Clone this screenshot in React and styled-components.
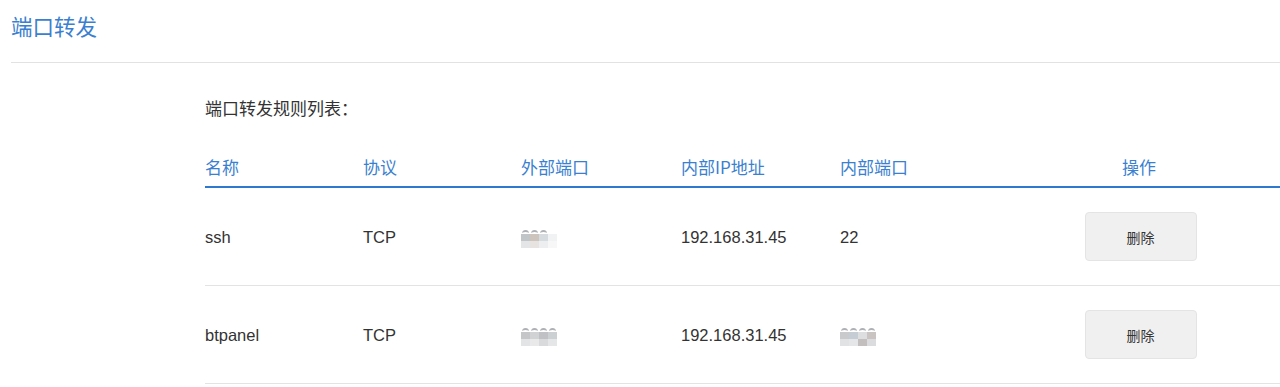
import React from "react";
import styled, { createGlobalStyle } from "styled-components";

const Global = createGlobalStyle`
  html, body { margin: 0; padding: 0; background: #fff; }
  body { font-family: "Liberation Sans", "Noto Sans CJK SC", sans-serif; color: #333; }
`;

const Page = styled.div`
  padding-left: 11px;
  width: 1269px;
`;

const TitleBar = styled.div`
  height: 63px;
  box-sizing: border-box;
  padding-top: 14px;
  border-bottom: 1px solid #e2e2e2;
`;

const Title = styled.h1`
  margin: 0;
  font-family: "Noto Sans CJK SC", sans-serif;
  font-weight: 400;
  font-size: 21.5px;
  line-height: 24px;
  color: #3b7fd0;
`;

const Content = styled.div`
  margin-left: 194px;
`;

const SubTitle = styled.div`
  margin-top: 33px;
  font-family: "Noto Sans CJK SC", sans-serif;
  font-size: 17px;
  line-height: 24px;
  color: #333;
`;

const Table = styled.div`
  margin-top: 26px;
`;

const Row = styled.div`
  display: grid;
  grid-template-columns: 158px 158px 160px 159px 158px 1fr;
  align-items: center;
  height: ${(p) => (p.$head ? "40px" : "97px")};
  border-bottom: ${(p) => (p.$head ? "2px solid #2f78cf" : "1px solid #e3e3e3")};
`;

const HeadCell = styled.div`
  font-family: "Noto Sans CJK SC", sans-serif;
  font-size: 17px;
  line-height: 24px;
  color: #3b7fd0;
  padding-top: 1px;
  text-align: ${(p) => (p.$center ? "center" : "left")};
`;

const Cell = styled.div`
  font-size: 16.5px;
  line-height: 24px;
  color: #333;
  display: flex;
  justify-content: ${(p) => (p.$center ? "center" : "flex-start")};
`;

const DelButton = styled.button`
  width: 112px;
  height: 49px;
  background: #f0f0f0;
  border: 1px solid #e4e4e4;
  border-radius: 4px;
  font-family: "Noto Sans CJK SC", sans-serif;
  font-size: 14px;
  color: #333;
  padding: 0;
  margin-left: 3px;
`;

const MosaicWrap = styled.div`
  display: inline-flex;
  flex-direction: column;
  padding-top: 4px;
`;

const MosaicTop = styled.div`
  display: flex;
  gap: 2px;
  height: 4px;
  padding-left: 1px;
`;

const Hint = styled.span`
  width: 7px;
  height: 4px;
  border-radius: 4px 4px 0 0;
  border-top: 2px solid #8c8f96;
  box-sizing: border-box;
  opacity: 0.7;
`;

const MosaicGrid = styled.div`
  display: grid;
  grid-template-columns: repeat(${(p) => p.$cols}, 9px);
  grid-auto-rows: 7px;
`;

const Px = styled.span`
  display: block;
`;

function Mosaic({ hints, colors, cols }) {
  return (
    <MosaicWrap>
      <MosaicTop>
        {Array.from({ length: hints }).map((_, i) => (
          <Hint key={i} />
        ))}
      </MosaicTop>
      <MosaicGrid $cols={cols}>
        {colors.map((c, i) => (
          <Px key={i} style={{ background: c }} />
        ))}
      </MosaicGrid>
    </MosaicWrap>
  );
}

const rows = [
  {
    name: "ssh",
    proto: "TCP",
    ext: (
      <Mosaic
        hints={3}
        cols={4}
        colors={["#c2c5c8", "#cdc4bd", "#d6dbdf", "#f1f2f4", "#e3e5e7", "#e6e3e1", "#eceef0", "#f7f7f8"]}
      />
    ),
    ip: "192.168.31.45",
    port: "22",
  },
  {
    name: "btpanel",
    proto: "TCP",
    ext: (
      <Mosaic
        hints={4}
        cols={4}
        colors={["#c4c6c8", "#d0d2d4", "#bfc1c4", "#cdd0d2", "#e2e4e5", "#e9e9ea", "#d9dadc", "#e4e6e7"]}
      />
    ),
    ip: "192.168.31.45",
    port: (
      <Mosaic
        hints={4}
        cols={4}
        colors={["#c8cacc", "#c5ccd3", "#dcdee0", "#c9c3c2", "#e1e2e3", "#e5e6e7", "#c4bfbf", "#dadcde"]}
      />
    ),
  },
];

export default function App() {
  return (
    <>
      <Global />
      <Page>
        <TitleBar>
          <Title>端口转发</Title>
        </TitleBar>
        <Content>
          <SubTitle>端口转发规则列表：</SubTitle>
          <Table>
            <Row $head>
              <HeadCell>名称</HeadCell>
              <HeadCell>协议</HeadCell>
              <HeadCell>外部端口</HeadCell>
              <HeadCell>内部IP地址</HeadCell>
              <HeadCell>内部端口</HeadCell>
              <HeadCell $center>操作</HeadCell>
            </Row>
            {rows.map((r) => (
              <Row key={r.name}>
                <Cell>{r.name}</Cell>
                <Cell>{r.proto}</Cell>
                <Cell>{r.ext}</Cell>
                <Cell>{r.ip}</Cell>
                <Cell>{r.port}</Cell>
                <Cell $center>
                  <DelButton>删除</DelButton>
                </Cell>
              </Row>
            ))}
          </Table>
        </Content>
      </Page>
    </>
  );
}
